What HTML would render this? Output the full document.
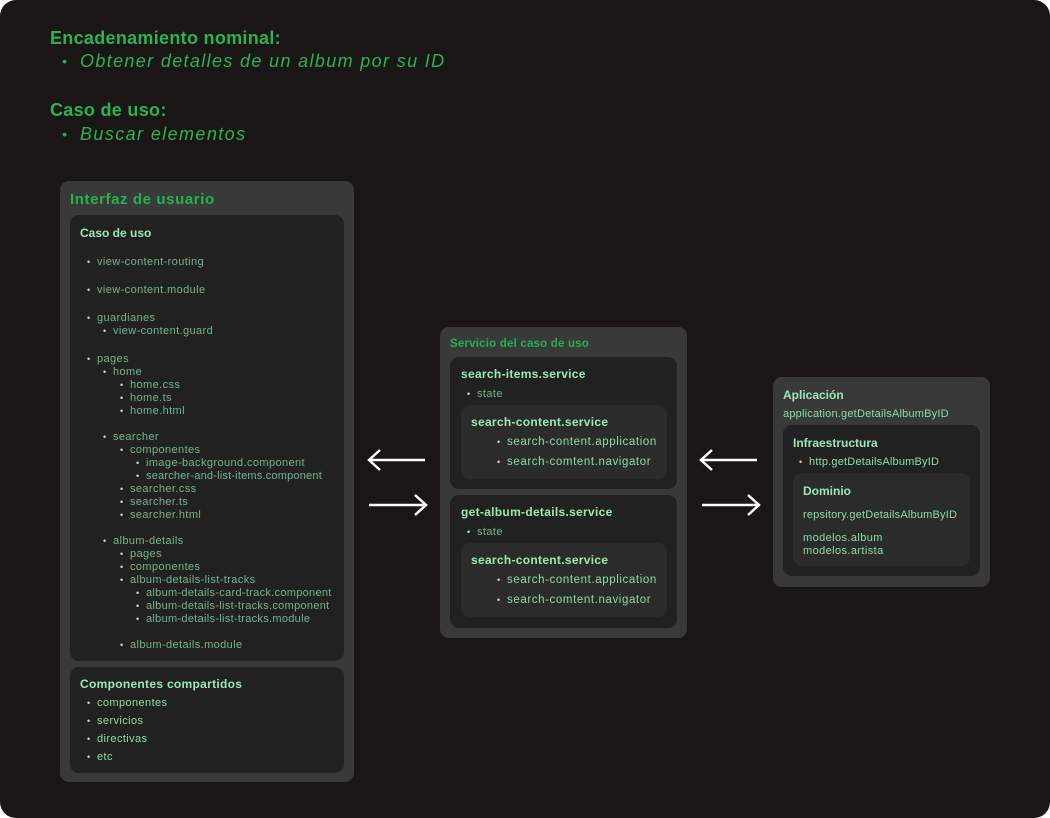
<!DOCTYPE html>
<html><head><meta charset="utf-8"><style>
*{margin:0;padding:0;box-sizing:border-box}
html,body{width:1050px;height:818px;background:#fff;overflow:hidden}
body{font-family:"Liberation Sans",sans-serif}
#bg{position:absolute;left:0;top:0;width:1050px;height:818px;background:#1a1616;border-radius:16px}
.b{position:absolute;border-radius:9px}
.p{background:#393939}.d{background:#212121}.m{background:#2b2b2b}
.t{position:absolute;white-space:nowrap;font-size:11px;line-height:14px;color:#78b48a;letter-spacing:0.4px}
.l{color:#8fdcaa}
.h{position:absolute;white-space:nowrap;font-weight:bold;color:#9be9b4;font-size:12px;line-height:14px}
.g{color:#27b550}
.u::before{content:"•";position:absolute;left:-10px;font-size:9px;color:#b8e8c6;letter-spacing:0}
.big::before{font-size:14px;left:-18px;color:#27b550}
.w{letter-spacing:0.6px}
</style></head><body>
<div id="bg"></div>
<div class="h g" style="left:50px;top:27px;font-size:18px;line-height:22px;letter-spacing:0.3px">Encadenamiento nominal:</div>
<div class="t g u big" style="left:80px;top:50px;font-size:18px;line-height:22px;font-style:italic;color:#27b550;letter-spacing:1.35px">Obtener detalles de un album por su ID</div>
<div class="h g" style="left:50px;top:99px;font-size:18px;line-height:22px;letter-spacing:0.3px">Caso de uso:</div>
<div class="t g u big" style="left:80px;top:123px;font-size:18px;line-height:22px;font-style:italic;color:#27b550;letter-spacing:1.4px">Buscar elementos</div>

<!-- left panel -->
<div class="b p" style="left:60px;top:181px;width:294px;height:601px"></div>
<div class="h g" style="left:70px;top:191px;font-size:15px;line-height:18px;color:#25b24f;letter-spacing:0.6px">Interfaz de usuario</div>
<div class="b d" style="left:70px;top:215px;width:274px;height:446px"></div>
<div class="h" style="left:80px;top:226px">Caso de uso</div>
<div class="t u" style="left:97px;top:255px">view-content-routing</div>
<div class="t u" style="left:97px;top:283px">view-content.module</div>
<div class="t u" style="left:97px;top:311px">guardianes</div>
<div class="t u" style="left:113px;top:324px">view-content.guard</div>
<div class="t u" style="left:97px;top:352px">pages</div>
<div class="t u" style="left:113px;top:365px">home</div>
<div class="t u" style="left:130px;top:378px">home.css</div>
<div class="t u" style="left:130px;top:391px">home.ts</div>
<div class="t u" style="left:130px;top:404px">home.html</div>
<div class="t u" style="left:113px;top:430px">searcher</div>
<div class="t u" style="left:130px;top:443px">componentes</div>
<div class="t u" style="left:146px;top:456px">image-background.component</div>
<div class="t u" style="left:146px;top:469px;letter-spacing:0.2px">searcher-and-list-items.component</div>
<div class="t u" style="left:130px;top:482px">searcher.css</div>
<div class="t u" style="left:130px;top:495px">searcher.ts</div>
<div class="t u" style="left:130px;top:508px">searcher.html</div>
<div class="t u" style="left:113px;top:534px">album-details</div>
<div class="t u" style="left:130px;top:547px">pages</div>
<div class="t u" style="left:130px;top:560px">componentes</div>
<div class="t u" style="left:130px;top:573px">album-details-list-tracks</div>
<div class="t u" style="left:146px;top:586px;letter-spacing:0.3px">album-details-card-track.component</div>
<div class="t u" style="left:146px;top:599px;letter-spacing:0.3px">album-details-list-tracks.component</div>
<div class="t u" style="left:146px;top:612px;letter-spacing:0.3px">album-details-list-tracks.module</div>
<div class="t u" style="left:130px;top:638px">album-details.module</div>

<div class="b d" style="left:70px;top:667px;width:274px;height:106px"></div>
<div class="h" style="left:80px;top:677px;letter-spacing:0.3px">Componentes compartidos</div>
<div class="t u l" style="left:97px;top:696px">componentes</div>
<div class="t u l" style="left:97px;top:714px">servicios</div>
<div class="t u l" style="left:97px;top:732px">directivas</div>
<div class="t u l" style="left:97px;top:750px">etc</div>

<!-- arrows -->
<svg style="position:absolute;left:0;top:0" width="1050" height="818" fill="none" stroke="#fff" stroke-width="2.5">
<path d="M425 460H370M380 450L369 460L380 470"/>
<path d="M369 505H425M415 495L426 505L415 515"/>
<path d="M757 460H702M712 450L701 460L712 470"/>
<path d="M702 505H758M748 495L759 505L748 515"/>
</svg>

<!-- middle -->
<div class="b p" style="left:440px;top:327px;width:247px;height:311px"></div>
<div class="h g" style="left:450px;top:337px;font-size:11.5px;color:#25b24f;letter-spacing:0.2px">Servicio del caso de uso</div>
<div class="b d" style="left:450px;top:357px;width:227px;height:132px"></div>
<div class="h" style="left:461px;top:367px;letter-spacing:0.3px">search-items.service</div>
<div class="t u" style="left:477px;top:387px">state</div>
<div class="b m" style="left:461px;top:405px;width:206px;height:74px"></div>
<div class="h" style="left:471px;top:415px;letter-spacing:0.3px">search-content.service</div>
<div class="t u l w" style="left:507px;top:435px;font-size:11.5px">search-content.application</div>
<div class="t u l w" style="left:507px;top:455px;font-size:11.5px">search-comtent.navigator</div>

<div class="b d" style="left:450px;top:495px;width:227px;height:133px"></div>
<div class="h" style="left:461px;top:505px;letter-spacing:0.3px">get-album-details.service</div>
<div class="t u" style="left:477px;top:525px">state</div>
<div class="b m" style="left:461px;top:543px;width:206px;height:74px"></div>
<div class="h" style="left:471px;top:553px;letter-spacing:0.3px">search-content.service</div>
<div class="t u l w" style="left:507px;top:573px;font-size:11.5px">search-content.application</div>
<div class="t u l w" style="left:507px;top:593px;font-size:11.5px">search-comtent.navigator</div>

<!-- right -->
<div class="b p" style="left:773px;top:377px;width:217px;height:210px"></div>
<div class="h" style="left:783px;top:388px">Aplicación</div>
<div class="t l" style="left:783px;top:407px;letter-spacing:0.2px">application.getDetailsAlbumByID</div>
<div class="b d" style="left:783px;top:425px;width:197px;height:151px"></div>
<div class="h" style="left:793px;top:436px">Infraestructura</div>
<div class="t u l" style="left:809px;top:455px;letter-spacing:0.2px">http.getDetailsAlbumByID</div>
<div class="b m" style="left:793px;top:473px;width:177px;height:93px"></div>
<div class="h" style="left:803px;top:484px">Dominio</div>
<div class="t l" style="left:803px;top:508px;letter-spacing:0.2px">repsitory.getDetailsAlbumByID</div>
<div class="t l" style="left:803px;top:531px">modelos.album</div>
<div class="t l" style="left:803px;top:544px">modelos.artista</div>
</body></html>
